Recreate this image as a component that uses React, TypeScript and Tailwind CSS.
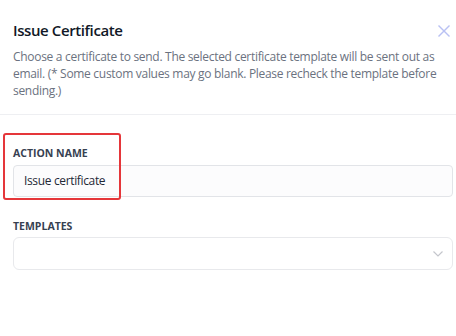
export default function App() {
  return (
    <div
      className="relative w-[456px] h-[336px] bg-white overflow-hidden text-[#1f2937]"
      style={{ fontFamily: '"Open Sans", "Noto Sans", sans-serif' }}
    >
      {/* Header */}
      <div className="pl-[13px] pr-[3px] pt-[18px] pb-[15px] border-b border-[#eeeff2]">
        <div className="flex items-start justify-between">
          <h2 className="text-[15px] leading-[24px] font-semibold tracking-[-0.4px] text-[#111827]">Issue Certificate</h2>
          <button className="mt-[7px] mr-[2px]">
            <svg width="14" height="12" viewBox="0 0 14 12" fill="none" stroke="#b9c1f3" strokeWidth="1.4">
              <line x1="1.5" y1="0.5" x2="12.5" y2="11.5" />
              <line x1="12.5" y1="0.5" x2="1.5" y2="11.5" />
            </svg>
          </button>
        </div>
        <p className="mt-[6px] text-[12px] leading-[17px] tracking-[-0.3px] text-[#6b7280] pr-[10px]">
          Choose a certificate to send. The selected certificate template will be sent out as email. (* Some custom values
          may go blank. Please recheck the template before sending.)
        </p>
      </div>

      {/* Body */}
      <div className="pl-[13px] pr-[3px] pt-[30px] flex flex-col gap-[21px]">
        <div className="flex flex-col gap-[4px]">
          <label className="text-[10.5px] leading-[16px] font-bold uppercase text-[#374151]">Action name</label>
          <div className="h-[32px] rounded-[4px] border border-[#e2e4e8] bg-[#fcfcfd] flex items-center px-[10px] text-[12px] tracking-[-0.35px] text-[#1f2937]">
            Issue certificate
          </div>
        </div>
        <div className="flex flex-col gap-[3px]">
          <label className="text-[10.5px] leading-[16px] font-bold uppercase text-[#374151]">Templates</label>
          <div className="h-[33px] rounded-[6px] border border-[#e8e9ec] bg-white flex items-center justify-end pr-[9px]">
            <svg width="10" height="6" viewBox="0 0 10 6" fill="none" stroke="#c4c6cc" strokeWidth="1.2">
              <polyline points="0.5,0.5 5,5 9.5,0.5" />
            </svg>
          </div>
        </div>
      </div>

      {/* annotation highlight */}
      <div className="absolute left-[3px] top-[133px] w-[118px] h-[67px] border-2 border-[#e5363a] rounded-[3px] pointer-events-none" />
    </div>
  );
}
